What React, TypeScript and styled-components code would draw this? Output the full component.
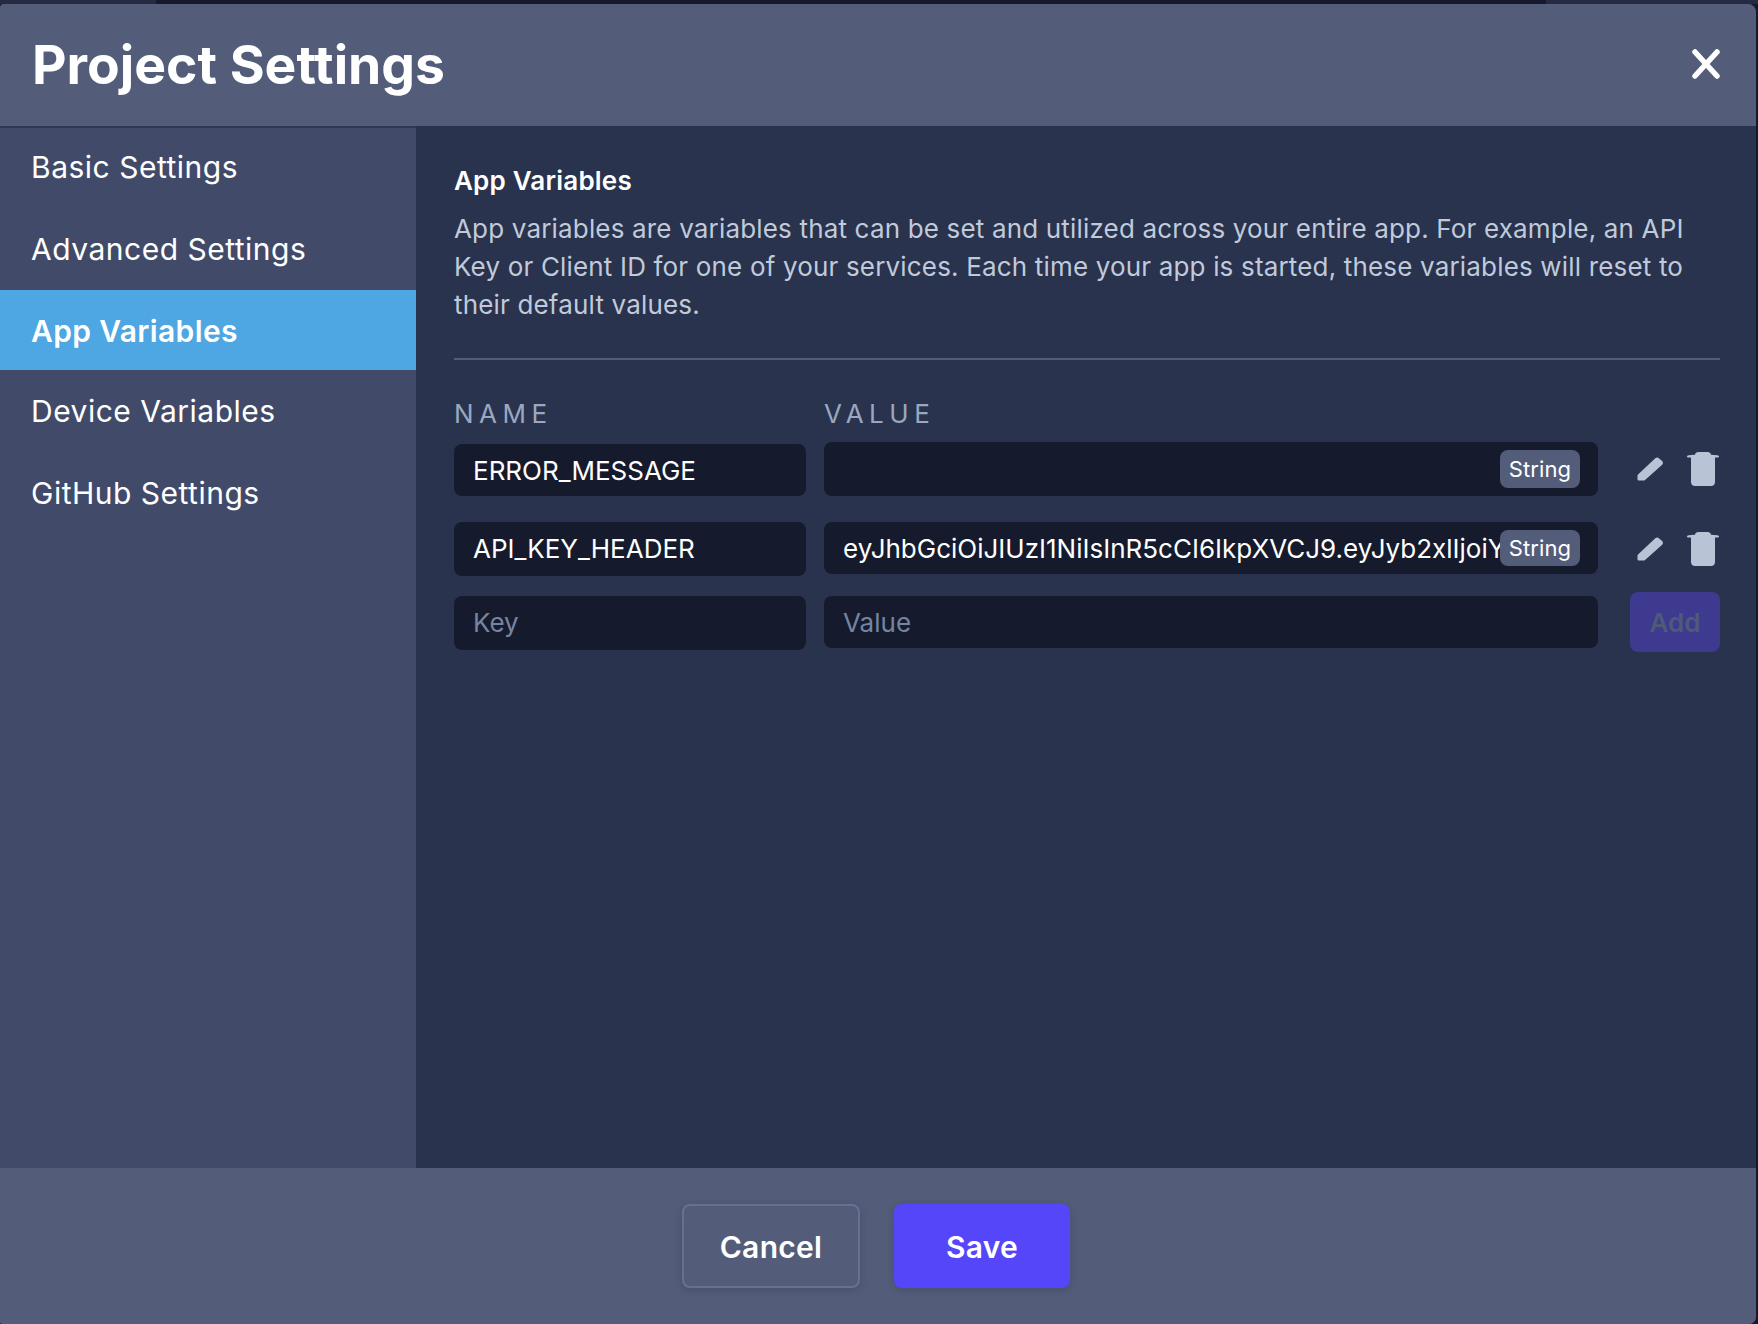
import React from "react";
import styled, { createGlobalStyle } from "styled-components";

const GlobalStyle = createGlobalStyle`
  html, body {
    margin: 0;
    padding: 0;
    background: #15192b;
    font-family: Inter, "Liberation Sans", sans-serif;
    -webkit-font-smoothing: antialiased;
  }
  * { box-sizing: border-box; }
`;

const Page = styled.div`
  width: 1758px;
  height: 1324px;
  padding-right: 2px;
  background: #15192b;
  overflow: hidden;
`;

// the sliver of the page behind the dialog that shows above it
const Backdrop = styled.div`
  width: 1758px;
  height: 4px;
  display: flex;
  justify-content: space-between;
`;

const BackdropPanel = styled.div<{ $width: number }>`
  width: ${(p) => p.$width}px;
  background: #232a42;
`;

const Modal = styled.div`
  height: 1320px;
  display: flex;
  flex-direction: column;
  background: #29334d;
  border-radius: 4px 8px 7px 2px;
  overflow: hidden;
`;

const Header = styled.header`
  height: 122px;
  flex: none;
  display: flex;
  align-items: center;
  justify-content: space-between;
  padding: 0 36px 2px 32px;
  background: #535d7a;
`;

const Title = styled.h1`
  margin: 0;
  color: #fff;
  font-size: 53.4px;
  font-weight: 700;
`;

const CloseButton = styled.button`
  display: flex;
  padding: 0;
  border: none;
  background: none;
  color: #fff;
`;

const Body = styled.div`
  flex: 1;
  display: flex;
  min-height: 0;
`;

const Sidebar = styled.nav`
  width: 416px;
  flex: none;
  border-top: 2px solid #2f3955;
  background: #414b69;
`;

const NavItem = styled.div<{ $active?: boolean }>`
  height: ${(p) => (p.$active ? 80 : 81)}px;
  display: flex;
  align-items: center;
  padding-left: 31px;
  padding-top: ${(p) => (p.$active ? 2 : 0)}px;
  color: #fff;
  font-size: 30px;
  letter-spacing: ${(p) => (p.$active ? 0.35 : 0.5)}px;
  font-weight: ${(p) => (p.$active ? 600 : 400)};
  background: ${(p) => (p.$active ? "#4ea6e2" : "transparent")};

  &:nth-child(1) {
    padding-bottom: 3px;
  }
  &:nth-child(2) {
    padding-bottom: 1px;
  }
  &:nth-child(5) {
    padding-top: 2px;
  }
`;

const Content = styled.main`
  flex: 1;
  padding: 36px 36px 0 38px;
`;

const SectionTitle = styled.h2`
  margin: 0 0 10px;
  color: #fff;
  font-size: 26px;
  font-weight: 600;
  letter-spacing: 0.2px;
  line-height: 38px;
`;

const Description = styled.p`
  margin: 0;
  padding-bottom: 34px;
  color: #c0cadb;
  font-size: 26px;
  letter-spacing: 0.17px;
  line-height: 38px;
  border-bottom: 2px solid #535d7a;
`;

const ColumnLabels = styled.div`
  display: grid;
  grid-template-columns: 352px 1fr;
  column-gap: 18px;
  margin-top: 38px;
`;

const ColumnLabel = styled.span`
  color: #9aa7c0;
  font-size: 26px;
  letter-spacing: 5.5px;
  line-height: 32px;
`;

const Row = styled.div<{ $top: number; $align: string }>`
  display: grid;
  grid-template-columns: 352px 774px 1fr;
  column-gap: 18px;
  align-items: ${(p) => p.$align};
  margin-top: ${(p) => p.$top}px;
`;

const Field = styled.div<{ $height: number; $muted?: boolean }>`
  position: relative;
  height: ${(p) => p.$height}px;
  display: flex;
  align-items: center;
  padding-left: 19px;
  padding-bottom: ${(p) => p.$height - 52}px;
  overflow: hidden;
  border-radius: 8px;
  background: #151b2c;
  color: ${(p) => (p.$muted ? "#7584a3" : "#fff")};
  font-size: 26px;
  white-space: nowrap;
`;

const TypeChip = styled.span`
  position: absolute;
  right: 18px;
  top: 8px;
  bottom: 8px;
  width: 80px;
  display: flex;
  align-items: center;
  justify-content: center;
  padding-bottom: 1px;
  border-radius: 8px;
  background: #535d7a;
  color: #fff;
  font-size: 22px;
  letter-spacing: 0.1px;
`;

const Actions = styled.div`
  align-self: center;
  display: flex;
  align-items: center;
  justify-content: flex-end;
  gap: 24px;
  padding-right: 1px;
  color: #b8c3d6;
`;

const AddButton = styled.button`
  width: 90px;
  height: 60px;
  margin-top: -4px;
  justify-self: end;
  border: none;
  border-radius: 8px;
  background: #3d3a8f;
  color: #4e5a78;
  font-family: inherit;
  font-size: 26px;
  font-weight: 600;
`;

const Footer = styled.footer`
  height: 156px;
  flex: none;
  display: flex;
  justify-content: center;
  align-items: flex-start;
  gap: 34px;
  padding: 36px 4px 0 0;
  background: #535d7a;
`;

const FooterButton = styled.button<{ $primary?: boolean }>`
  width: ${(p) => (p.$primary ? 176 : 178)}px;
  height: 84px;
  padding-top: 2px;
  border: 2px solid ${(p) => (p.$primary ? "#5646f9" : "#667090")};
  border-radius: 8px;
  background: ${(p) => (p.$primary ? "#5646f9" : "transparent")};
  box-shadow: 0 2px 8px rgba(21, 25, 43, 0.2);
  color: #fff;
  font-family: inherit;
  font-size: 30px;
  font-weight: 600;
  letter-spacing: 0.3px;
`;

const CloseIcon = () => (
  <svg width="28" height="30" viewBox="0 0 28 30">
    <path d="M3 3 25 27M25 3 3 27" stroke="currentColor" strokeWidth="5.5" strokeLinecap="round" fill="none" />
  </svg>
);

const PencilIcon = () => (
  <svg width="26" height="24" viewBox="0 0 26 24">
    <path
      d="M18 1.600a3 3 0 0 1 4.200-.2l2.600 2.400a3 3 0 0 1 .1 4.300L7.500 23.500H1.500a1 1 0 0 1-1-1V18z"
      fill="currentColor"
    />
  </svg>
);

const TrashIcon = () => (
  <svg width="32" height="34" viewBox="0 0 32 34">
    <path
      d="M8 2.800C8.300 1 9.500 0 11.500 0h9c2 0 3.200 1 3.500 2.800l6.500.4c1 .1 1.500.6 1.500 1.300 0 .6-.6 1.100-1.500 1.100H28V30c0 2.400-1.600 4-4 4H8c-2.400 0-4-1.600-4-4V5.600H1.500C.6 5.600 0 5.100 0 4.500c0-.7.5-1.200 1.500-1.300z"
      fill="currentColor"
    />
  </svg>
);

const navItems = ["Basic Settings", "Advanced Settings", "App Variables", "Device Variables", "GitHub Settings"];

const variables = [
  { name: "ERROR_MESSAGE", value: "", top: 12, align: "end", nameHeight: 52, valueHeight: 54 },
  {
    name: "API_KEY_HEADER",
    value: "eyJhbGciOiJIUzI1NiIsInR5cCI6IkpXVCJ9.eyJyb2xlIjoiY",
    top: 26,
    align: "start",
    nameHeight: 54,
    valueHeight: 52,
  },
];

export default function App() {
  return (
    <Page>
      <GlobalStyle />
      <Backdrop>
        <BackdropPanel $width={156} />
        <BackdropPanel $width={212} />
      </Backdrop>
      <Modal>
        <Header>
          <Title>Project Settings</Title>
          <CloseButton>
            <CloseIcon />
          </CloseButton>
        </Header>
        <Body>
          <Sidebar>
            {navItems.map((item) => (
              <NavItem key={item} $active={item === "App Variables"}>
                {item}
              </NavItem>
            ))}
          </Sidebar>
          <Content>
            <SectionTitle>App Variables</SectionTitle>
            <Description>
              App variables are variables that can be set and utilized across your entire app. For example, an API
              Key or Client ID for one of your services. Each time your app is started, these variables will reset to
              their default values.
            </Description>
            <ColumnLabels>
              <ColumnLabel>NAME</ColumnLabel>
              <ColumnLabel>VALUE</ColumnLabel>
            </ColumnLabels>
            {variables.map((v) => (
              <Row key={v.name} $top={v.top} $align={v.align}>
                <Field $height={v.nameHeight}>{v.name}</Field>
                <Field $height={v.valueHeight}>
                  {v.value}
                  <TypeChip>String</TypeChip>
                </Field>
                <Actions>
                  <PencilIcon />
                  <TrashIcon />
                </Actions>
              </Row>
            ))}
            <Row $top={20} $align="start">
              <Field $height={54} $muted>
                Key
              </Field>
              <Field $height={52} $muted>
                Value
              </Field>
              <AddButton>Add</AddButton>
            </Row>
          </Content>
        </Body>
        <Footer>
          <FooterButton>Cancel</FooterButton>
          <FooterButton $primary>Save</FooterButton>
        </Footer>
      </Modal>
    </Page>
  );
}
